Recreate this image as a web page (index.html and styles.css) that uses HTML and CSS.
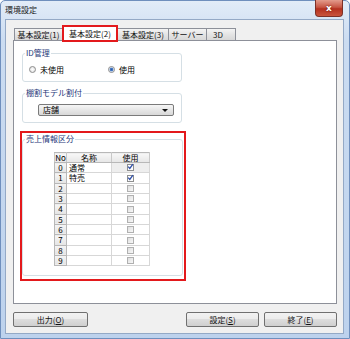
FILE: index.html
```html
<!DOCTYPE html>
<html lang="ja">
<head>
    <meta charset="UTF-8">
    <title>環境設定</title>
    <link rel="stylesheet" href="styles.css">
</head>
<body>
    <div class="window">
        <!-- タイトルバー -->
        <div class="titlebar">
            <span class="title">環境設定</span>
            <button class="close-button">x</button>
        </div>

        <div class="client">
            <!-- タブ -->
            <div class="tabs">
                <div class="tab tab-1">基本設定(1)</div>
                <div class="tab tab-2 active">基本設定(2)</div>
                <div class="tab tab-3">基本設定(3)</div>
                <div class="tab tab-4">サーバー</div>
                <div class="tab tab-5">3D</div>
            </div>

            <div class="panel">
                <fieldset class="group id-group">
                    <legend>ID管理</legend>
                    <div class="radio-row">
                        <label class="radio-item first"><span class="radio"></span>未使用</label>
                        <label class="radio-item"><span class="radio checked"></span>使用</label>
                    </div>
                </fieldset>

                <fieldset class="group model-group">
                    <legend>棚割モデル割付</legend>
                    <div class="select">
                        <span>店舗</span>
                        <span class="arrow"></span>
                    </div>
                </fieldset>

                <div class="highlight">
                    <fieldset class="group sales-group">
                        <legend>売上情報区分</legend>
                        <table class="grid">
                            <thead>
                                <tr><th class="col-no">No</th><th class="col-name">名称</th><th class="col-use">使用</th></tr>
                            </thead>
                            <tbody id="gridBody"></tbody>
                        </table>
                    </fieldset>
                </div>
            </div>

            <!-- ボタン -->
            <div class="buttons">
                <button class="btn btn-wide">出力(<u>O</u>)</button>
                <button class="btn push-right">設定(<u>S</u>)</button>
                <button class="btn">終了(<u>E</u>)</button>
            </div>
        </div>
    </div>

    <script>
        // 売上情報区分の行を作成
        const rows = [
            { name: '通常', use: true },
            { name: '特売', use: true },
            { name: '', use: false },
            { name: '', use: false },
            { name: '', use: false },
            { name: '', use: false },
            { name: '', use: false },
            { name: '', use: false },
            { name: '', use: false },
            { name: '', use: false }
        ];
        const check = '<svg width="7" height="7" viewBox="0 0 7 7"><path d="M1.2 3.6 L2.8 5.4 L5.9 1.2" fill="none" stroke="#2f4fa8" stroke-width="1.3"/></svg>';
        const gridBody = document.getElementById('gridBody');

        rows.forEach((row, i) => {
            const tr = document.createElement('tr');
            tr.innerHTML =
                '<td class="col-no">' + i + '</td>' +
                '<td class="col-name">' + row.name + '</td>' +
                '<td class="col-use' + (i === 0 ? ' focus' : '') + '">' +
                '<span class="checkbox' + (row.use ? ' checked' : '') + '">' + (row.use ? check : '') + '</span></td>';
            gridBody.appendChild(tr);
        });
    </script>
</body>
</html>
```

FILE: styles.css
```css
/* リセット */
* {
    margin: 0;
    padding: 0;
    box-sizing: border-box;
}

body {
    width: 350px;
    height: 339px;
    font-family: "Noto Sans CJK JP", "Noto Sans CJK SC", sans-serif;
    font-size: 8px;
    color: #000;
    background-color: #fff;
    overflow: hidden;
}

/* ウィンドウ枠 */
.window {
    width: 350px;
    height: 339px;
    display: flex;
    flex-direction: column;
    background: linear-gradient(#e2ecf8, #cbdcf1 40px, #bdd2ed);
    border: 1px solid #6f8fbd;
    border-radius: 5px 5px 0 0;
}

.titlebar {
    height: 18px;
    display: flex;
    align-items: flex-start;
    padding-left: 4px;
}

.title {
    line-height: 17px;
    color: #1b1b1b;
}

.close-button {
    margin-left: auto;
    margin-right: 6px;
    margin-top: -1px;
    width: 28px;
    height: 17px;
    border: 1px solid #7d3027;
    border-top: none;
    border-radius: 0 0 4px 4px;
    background: linear-gradient(#e39b8c, #c75644 45%, #b4301f 55%, #c9543d);
    color: #fff;
    font-family: "DejaVu Sans", sans-serif;
    font-weight: bold;
    font-size: 9px;
    line-height: 14px;
    text-shadow: 0 0 2px #5a1008;
}

/* クライアント領域 */
.client {
    flex: 1;
    margin: 0 5px 4px 4px;
    background-color: #f0f0f0;
    border: 1px solid #94a9c6;
    padding: 6px 6px 6px 7px;
    display: flex;
    flex-direction: column;
}

/* タブ */
.tabs {
    height: 14px;
    display: flex;
    align-items: flex-end;
    padding-left: 1px;
}

.tab {
    height: 12px;
    border: 1px solid #8d9099;
    border-bottom: none;
    border-right: none;
    background: linear-gradient(#f4f4f4, #e4e4e4 50%, #d8d8d8);
    text-align: center;
    line-height: 11px;
    color: #111;
}

.tab-1 { width: 48px; }
.tab-3 { width: 50px; border-left: none; }
.tab-4 { width: 38px; }
.tab-5 { width: 30px; border-right: 1px solid #8d9099; text-align: left; padding-left: 6px; }

.tab.active {
    width: 56px;
    height: 17px;
    margin-bottom: -2px;
    border: 2px solid #e3191c;
    background: #fff;
    line-height: 13px;
    position: relative;
    z-index: 1;
}

/* タブパネル */
.panel {
    height: 264px;
    background-color: #fff;
    border: 1px solid #8d9099;
    padding: 7px 0 0 8px;
}

.group {
    border: 1px solid #d5dfe5;
    border-radius: 3px;
    width: 160px;
    min-width: 0;
    padding: 0;
}

.group legend {
    margin-left: 2px;
    padding: 0 1px;
    line-height: 10px;
    color: #1e3778;
}

/* ID管理 */
.id-group {
    padding: 6px 0 7px;
}

.radio-row {
    display: flex;
    height: 10px;
    align-items: center;
    margin-left: 6px;
}

.radio-item {
    display: flex;
    align-items: center;
    gap: 4px;
}

.radio-item.first {
    width: 79px;
}

.radio {
    width: 7px;
    height: 7px;
    border: 1px solid #8c8c8c;
    border-radius: 50%;
    background: radial-gradient(#ffffff, #dcdcdc);
    display: inline-block;
}

.radio.checked {
    background: radial-gradient(#2c5ca8 0, #4f80c8 1.5px, #dde6f2 2.2px, #f4f4f4);
}

/* 棚割モデル割付 */
.model-group {
    margin-top: 6px;
    padding: 6px 0;
}

.select {
    margin-left: 15px;
    width: 136px;
    height: 12px;
    border: 1px solid #7a7a7a;
    border-radius: 2px;
    background: linear-gradient(#f6f6f6, #e6e6e6 50%, #d8d8d8);
    display: flex;
    align-items: center;
    justify-content: space-between;
    padding: 0 5px 0 4px;
    line-height: 10px;
}

.arrow {
    width: 0;
    height: 0;
    border-left: 3px solid transparent;
    border-right: 3px solid transparent;
    border-top: 3px solid #111;
}

/* 売上情報区分 */
.highlight {
    margin: 8px 0 0 -2px;
    width: 166px;
    border: 2px solid #e3191c;
    padding: 1px 1px 3px 0;
}

.sales-group {
    width: 161px;
    padding: 8px 0 9px;
}

.grid {
    margin-left: 31px;
    width: 96px;
    border-collapse: collapse;
    border: 1px solid #9a9a9a;
    table-layout: fixed;
}

.grid th,
.grid td {
    height: 10px;
    line-height: 9px;
    border: 1px solid #d7d7d7;
    font-weight: normal;
    padding: 0;
}

.grid th {
    background: linear-gradient(#f8f8f8, #e6e6e6);
    border-color: #b8b8b8 #c8c8c8;
    text-align: center;
}

.grid .col-no {
    width: 12px;
    text-align: center;
}

.grid .col-name {
    width: 45px;
    padding-left: 2px;
}

.grid th.col-name {
    padding-left: 0;
}

.grid td.col-no {
    background: linear-gradient(#f6f6f6, #e4e4e4);
    border-color: #b8b8b8;
}

.grid td.col-use {
    text-align: center;
}

.grid td.focus {
    background-color: #eeeeee;
}

.checkbox {
    display: inline-block;
    width: 7px;
    height: 7px;
    border: 1px solid #b0b0b0;
    background: linear-gradient(135deg, #dedede, #f8f8f8);
    vertical-align: middle;
    position: relative;
    top: -1px;
}

.checkbox.checked {
    border-color: #8e8f8f;
    background: #fdfdfd;
}

.checkbox svg {
    position: absolute;
    left: -1px;
    top: -2px;
}

/* ボタン */
.buttons {
    display: flex;
    gap: 5px;
    margin-top: 8px;
    height: 15px;
}

.btn {
    width: 73px;
    height: 15px;
    border: 1px solid #707070;
    border-radius: 2px;
    background: linear-gradient(#f2f2f2, #ebebeb 50%, #dddddd 50%, #cfcfcf);
    font-family: inherit;
    font-size: 8px;
    line-height: 12px;
    color: #111;
}

.btn-wide {
    width: 75px;
}

.push-right {
    margin-left: auto;
}
```
